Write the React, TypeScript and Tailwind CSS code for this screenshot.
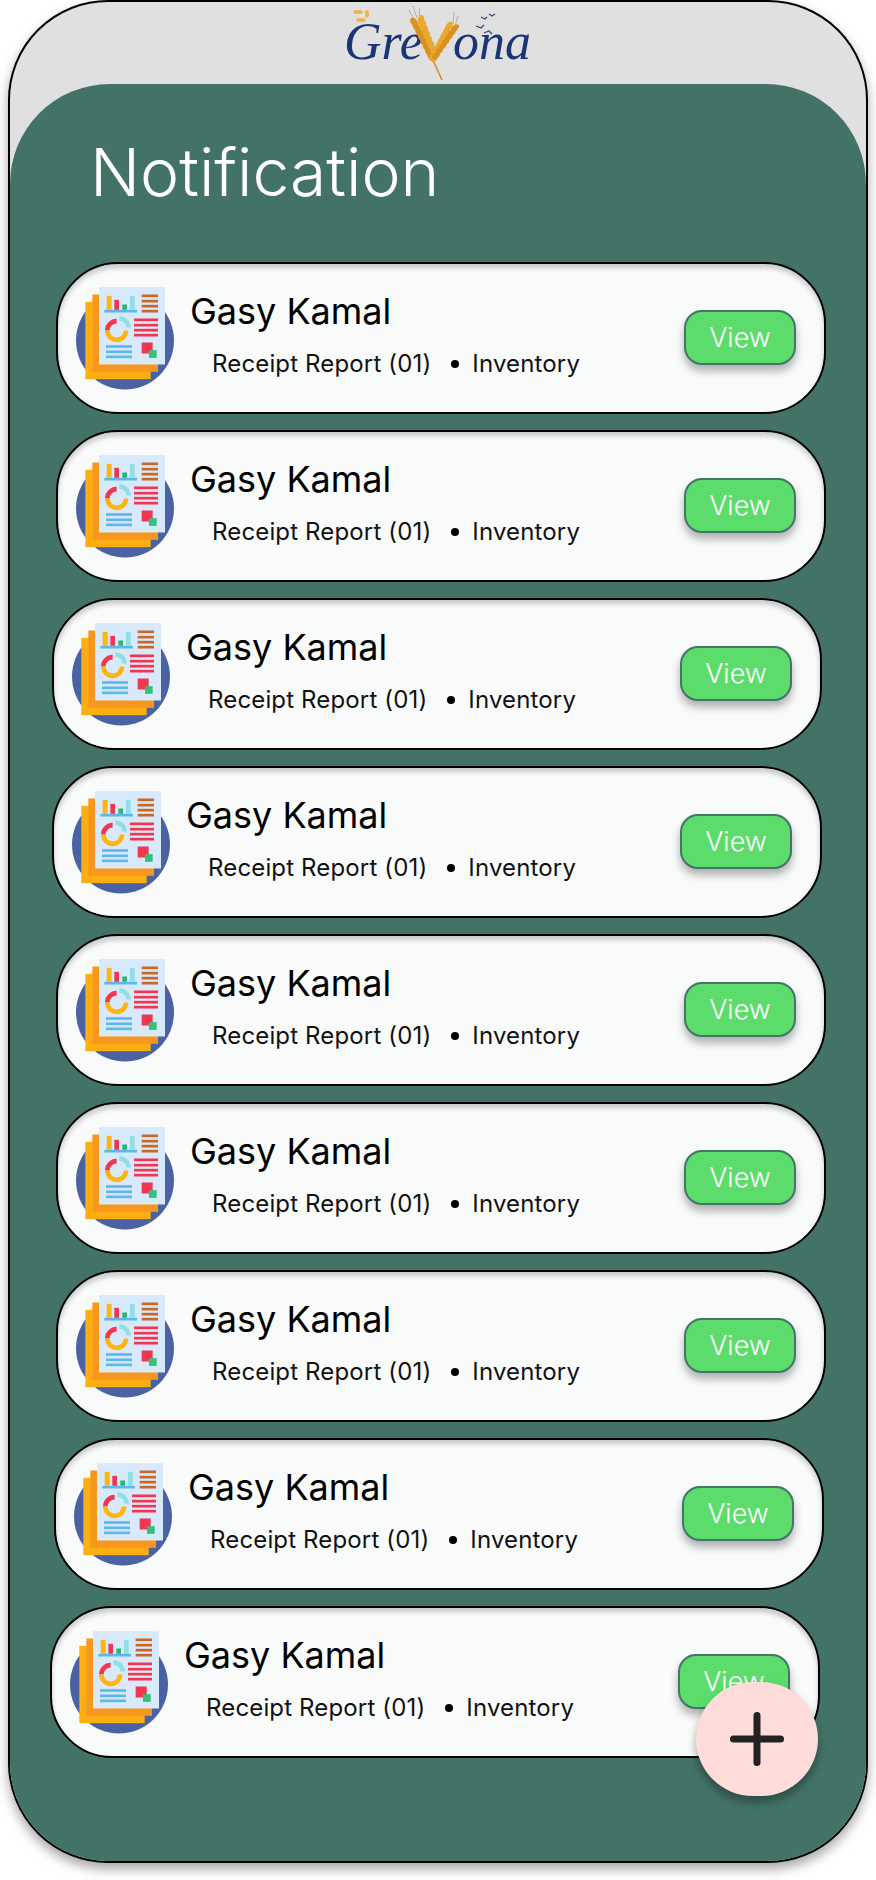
const rows = [
  "ml-[46px]",
  "ml-[46px]",
  "ml-[42px]",
  "ml-[42px]",
  "ml-[46px]",
  "ml-[46px]",
  "ml-[46px]",
  "ml-[44px]",
  "ml-[40px]",
];

function ReportIcon() {
  return (
    <svg viewBox="78 98 294 308" className="h-[103px] w-[98px] shrink-0">
      <circle cx="225" cy="258" r="147" fill="#4a62a3" />
      <rect x="106" y="142" width="196" height="232" fill="#fdae14" />
      <rect x="127" y="120" width="197" height="232" fill="#f9971c" />
      <rect x="147" y="98" width="198" height="232" fill="#d8e9fb" />
      <rect x="170" y="124" width="15" height="42" fill="#fdb515" />
      <rect x="193" y="136" width="14" height="30" fill="#f0374f" />
      <rect x="217" y="150" width="14" height="16" fill="#32b36f" />
      <rect x="240" y="124" width="14" height="42" fill="#8fe0e5" />
      <rect x="163" y="166" width="98" height="8" fill="#5cb8e8" />
      <rect x="275" y="120" width="49" height="8" fill="#c8692a" />
      <rect x="275" y="136" width="49" height="8" fill="#c8692a" />
      <rect x="275" y="151" width="49" height="8" fill="#c8692a" />
      <rect x="275" y="166" width="49" height="8" fill="#c8692a" />
      <path d="M172 228a28 28 0 0 1 28-28" fill="none" stroke="#f0374f" strokeWidth="14" />
      <path d="M208 192a28 28 0 0 1 28 27" fill="none" stroke="#8fe0e5" strokeWidth="14" />
      <path d="M172 228a28 28 0 0 0 56 0" fill="none" stroke="#fdb515" strokeWidth="14" />
      <rect x="252" y="192" width="72" height="8" fill="#f0374f" />
      <rect x="252" y="208" width="72" height="8" fill="#f0374f" />
      <rect x="252" y="223" width="72" height="8" fill="#f0374f" />
      <rect x="252" y="238" width="72" height="8" fill="#f0374f" />
      <rect x="168" y="272" width="78" height="8" fill="#5cb8e8" />
      <rect x="168" y="288" width="78" height="8" fill="#5cb8e8" />
      <rect x="168" y="303" width="78" height="8" fill="#5cb8e8" />
      <rect x="275" y="264" width="33" height="33" fill="#f0374f" />
      <rect x="297" y="287" width="23" height="23" fill="#32c07a" />
    </svg>
  );
}

// kernels of the two wheat ears, in svg units
const leftEar = [0, 1, 2, 3, 4, 5, 6, 7];
const rightEar = [0, 1, 2, 3, 4, 5, 6];

function Wheat() {
  return (
    <svg viewBox="0 0 70 78" className="absolute left-[46px] top-0 h-[78px] w-[70px]">
      <path d="M53 78 L44 58" stroke="#c98f2c" strokeWidth="1.5" fill="none" />
      <path d="M24 4 L28 16 M20 8 L26 20 M31 6 L30 14 M65 10 L64 22 M69 14 L66 24" stroke="#a89a80" strokeWidth="0.7" fill="none" />
      {leftEar.map((i) => (
        <g key={i}>
          <ellipse cx={25 + i * 2.5} cy={20 + i * 5} rx="3.2" ry="5" fill="#d9921f" transform={`rotate(-35 ${25 + i * 2.5} ${20 + i * 5})`} />
          <ellipse cx={32 + i * 2} cy={18 + i * 5.2} rx="3.2" ry="5" fill="#e9a92f" transform={`rotate(10 ${32 + i * 2} ${18 + i * 5.2})`} />
        </g>
      ))}
      {rightEar.map((i) => (
        <g key={i}>
          <ellipse cx={60 - i * 2.6} cy={24 + i * 4.9} rx="3" ry="5" fill="#e9a92f" transform={`rotate(35 ${60 - i * 2.6} ${24 + i * 4.9})`} />
          <ellipse cx={66 - i * 3.2} cy={26 + i * 4.6} rx="2.8" ry="4.6" fill="#d9921f" transform={`rotate(50 ${66 - i * 3.2} ${26 + i * 4.6})`} />
        </g>
      ))}
    </svg>
  );
}

function Logo() {
  return (
    <div className="relative mx-auto flex h-[82px] w-[190px] items-start pl-[1px] pt-[14px] font-['Liberation_Serif',serif] text-[52px] italic leading-none text-[#1a3478]">
      <span>Gre</span>
      <span className="ml-[30px]">ona</span>
      <Wheat />
      <svg viewBox="0 0 20 16" className="absolute left-[9px] top-[6px] h-[16px] w-[20px]">
        <ellipse cx="6" cy="4" rx="5" ry="2" fill="#eeb64a" />
        <ellipse cx="15" cy="6" rx="2" ry="4" fill="#eeb64a" />
        <ellipse cx="9" cy="12" rx="5" ry="2" fill="#eeb64a" />
      </svg>
      <svg viewBox="0 0 24 24" className="absolute left-[132px] top-[9px] h-[24px] w-[24px]" fill="none" stroke="#2e4a80" strokeWidth="1.3">
        <path d="M1 15l5 2 3-3M9 22l5-2 3 3M6 6l4 2 2-2M14 3l3 2 3-2" />
      </svg>
    </div>
  );
}

function Card({ offset }: { offset: string }) {
  return (
    <div
      className={`${offset} flex h-[152px] w-[770px] items-center rounded-[62px] border-2 border-black bg-[#f9fbfa] pl-[18px] pr-[28px] shadow-[inset_0_4px_5px_rgba(0,0,0,0.2)]`}
    >
      <ReportIcon />
      <div className="ml-[16px] flex flex-1 flex-col pb-[7px]">
        <div className="text-[36px] leading-[40px] text-black">Gasy Kamal</div>
        <div className="ml-[22px] mt-[18px] flex items-center text-[24px] leading-[30px] tracking-[0.15px] text-[#111]">
          <span>Receipt Report (01)</span>
          <span className="ml-[20px] h-[8px] w-[8px] rounded-full bg-black" />
          <span className="ml-[13px]">Inventory</span>
        </div>
      </div>
      <button className="mb-[2px] h-[55px] w-[112px] rounded-[18px] border-2 border-[#44746a] bg-[#5cdd6b] pt-[2px] text-[27px] font-light text-white shadow-[0_6px_8px_rgba(0,0,0,0.3)]">
        View
      </button>
    </div>
  );
}

export default function App() {
  return (
    <div className="h-[1880px] w-[876px] bg-white pl-[8px] font-['Inter',sans-serif]">
      <div className="relative flex h-[1863px] w-[860px] flex-col overflow-hidden rounded-[100px] border-2 border-black bg-[#e0e0e0] shadow-[0_6px_12px_rgba(0,0,0,0.35)]">
        <Logo />
        <div className="flex-1 rounded-t-[100px] bg-[#437367]">
          <h1 className="pl-[80px] pt-[55px] text-[66px] font-light leading-[66px] text-white">Notification</h1>
          <div className="mt-[57px] flex flex-col gap-[16px]">
            {rows.map((offset, i) => (
              <Card key={i} offset={offset} />
            ))}
          </div>
        </div>
        <button className="absolute bottom-[65px] right-[48px] flex h-[114px] w-[122px] items-center justify-center rounded-full bg-[#fddcd9] shadow-[0_6px_10px_rgba(0,0,0,0.35)]">
          <svg viewBox="0 0 54 54" className="h-[54px] w-[54px]" stroke="#222" strokeWidth="7" strokeLinecap="round">
            <path d="M27 3.5v47M3.5 27h47" />
          </svg>
        </button>
      </div>
    </div>
  );
}
